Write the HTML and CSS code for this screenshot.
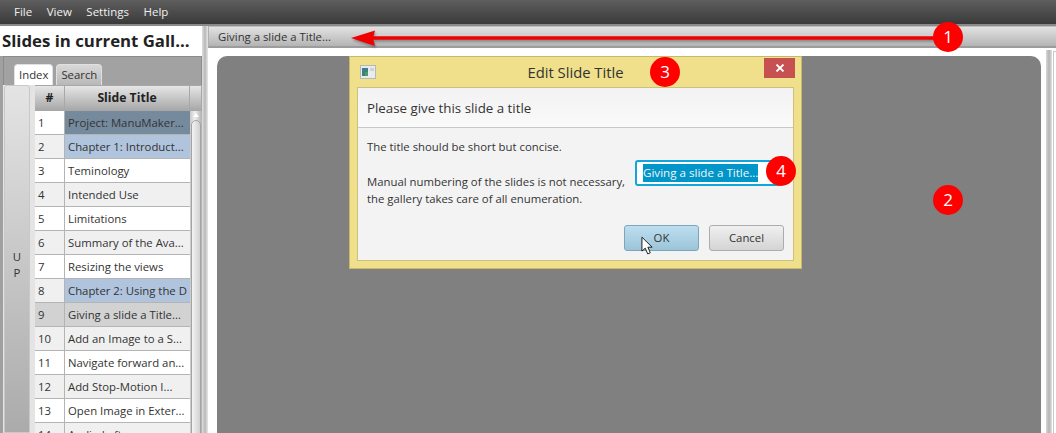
FILE: index.html
```html
<!DOCTYPE html>
<html lang="en">
<head>
  <meta charset="UTF-8">
  <meta name="viewport" content="width=device-width, initial-scale=1.0">
  <title>Edit Slide Title</title>
  <link rel="stylesheet" href="styles.css">
</head>
<body>

  <div class="app">
    <div class="menubar">
      <span>File</span>
      <span>View</span>
      <span>Settings</span>
      <span>Help</span>
    </div>

    <div class="main">
      <div class="side">
        <div class="side-title">Slides in current Gall...</div>
        <div class="tabs">
          <div class="tab active">Index</div>
          <div class="tab">Search</div>
        </div>
        <div class="side-body">
          <div class="up-btn"><span>U</span><span>P</span></div>
          <div class="table">
            <div class="thead">
              <div class="th num">#</div>
              <div class="th title">Slide Title</div>
              <div class="th filler"></div>
            </div>
            <div class="tbody">
              <div class="rows">
                <div class="row"><div class="num">1</div><div class="title dark">Project: ManuMaker...</div></div>
                <div class="row alt"><div class="num">2</div><div class="title blue">Chapter 1: Introduct...</div></div>
                <div class="row"><div class="num">3</div><div class="title">Teminology</div></div>
                <div class="row alt"><div class="num">4</div><div class="title">Intended Use</div></div>
                <div class="row"><div class="num">5</div><div class="title">Limitations</div></div>
                <div class="row alt"><div class="num">6</div><div class="title">Summary of the Ava...</div></div>
                <div class="row"><div class="num">7</div><div class="title">Resizing the views</div></div>
                <div class="row alt"><div class="num">8</div><div class="title blue">Chapter 2: Using the D</div></div>
                <div class="row selected"><div class="num">9</div><div class="title">Giving a slide a Title...</div></div>
                <div class="row alt"><div class="num">10</div><div class="title">Add an Image to a S...</div></div>
                <div class="row"><div class="num">11</div><div class="title">Navigate forward an...</div></div>
                <div class="row alt"><div class="num">12</div><div class="title">Add Stop-Motion I...</div></div>
                <div class="row"><div class="num">13</div><div class="title">Open Image in Exter...</div></div>
                <div class="row alt"><div class="num">14</div><div class="title">Audio Left...</div></div>
              </div>
              <div class="scrollbar">
                <div class="scroll-arrow"></div>
                <div class="scroll-thumb"></div>
              </div>
            </div>
          </div>
        </div>
      </div>

      <div class="splitter"></div>

      <div class="content">
        <div class="slide-bar">Giving a slide a Title...</div>
        <div class="stage-wrap">
          <div class="stage"></div>
          <div class="stage-edge"></div>
          <div class="stage-pane"></div>
        </div>
      </div>
    </div>

    <div class="dialog">
      <div class="dialog-head">
        <svg class="app-icon" width="16" height="14" viewBox="0 0 16 14">
          <rect x="0.5" y="0.5" width="15" height="13" fill="#e8ecec" stroke="#b4b8b8"/>
          <rect x="2" y="3" width="6" height="8" fill="#3f7f80"/>
          <rect x="5" y="7" width="3" height="4" fill="#4f9a6a"/>
          <rect x="10" y="3" width="4" height="3" fill="#c4d4d8"/>
        </svg>
        <div class="dialog-title">Edit Slide Title</div>
        <div class="close-btn">
          <svg width="10" height="8" viewBox="0 0 10 8">
            <path d="M1.5 0.5L8.5 7.5M8.5 0.5L1.5 7.5" stroke="#fff" stroke-width="1.8" fill="none"/>
          </svg>
        </div>
      </div>
      <div class="dialog-panel">
        <div class="dialog-header">Please give this slide a title</div>
        <div class="dialog-body">
          <div class="dialog-text">
            <p>The title should be short but concise.</p>
            <p>Manual numbering of the slides is not necessary,<br>the gallery takes care of all enumeration.</p>
          </div>
          <div class="title-input"><span class="sel">Giving a slide a Title...</span></div>
        </div>
        <div class="dialog-buttons">
          <div class="btn ok">OK</div>
          <div class="btn">Cancel</div>
        </div>
      </div>
    </div>

    <svg class="arrow" width="584" height="20" viewBox="0 0 584 20">
      <path d="M20 10H584" stroke="#f00000" stroke-width="3.5"/>
      <path d="M0 10L24 2.5L22 10L24 18Z" fill="#f00000"/>
    </svg>

    <div class="badge b1">1</div>
    <div class="badge b2">2</div>
    <div class="badge b3">3</div>
    <div class="badge b4">4</div>

    <svg class="cursor" width="13" height="20" viewBox="0 0 14 21">
      <path d="M1 1V16L4.6 12.8L7.2 19L10 17.8L7.4 11.8H12Z" fill="#fff" stroke="#111" stroke-width="1"/>
    </svg>
  </div>

</body>
</html>
```

FILE: styles.css
```css
* {
  box-sizing: border-box;
}

body {
  margin: 0;
  font-family: "Open Sans", Arial, sans-serif;
  font-size: 11.35px;
  color: #333;
}

.app {
  position: relative;
  width: 1056px;
  height: 433px;
  overflow: hidden;
  display: flex;
  flex-direction: column;
  background-color: #fff;
}

.menubar {
  flex: none;
  height: 26px;
  display: flex;
  align-items: center;
  gap: 14.5px;
  padding: 0 0 4px 14px;
  color: #f0f0f0;
  font-size: 11.5px;
  background: linear-gradient(#5e5e5e, #3a3a3a 92%, #8a8a8a 92%);
}

.main {
  flex: 1;
  display: flex;
  min-height: 0;
}

/* left panel */
.side {
  flex: none;
  width: 202px;
  display: flex;
  flex-direction: column;
  background-color: #a0a0a0;
}

.side-title {
  flex: none;
  height: 30px;
  line-height: 29px;
  padding-left: 2px;
  background-color: #fff;
  color: #222;
  font-size: 16.8px;
  font-weight: bold;
  white-space: nowrap;
}

.tabs {
  flex: none;
  height: 29px;
  display: flex;
  align-items: flex-end;
  gap: 3px;
  padding-left: 10px;
  margin: 0 0 0 3px;
  background-color: #a2a2a2;
  border: 1px solid #8c8c8c;
  border-bottom: 0;
}

.tab {
  height: 21px;
  line-height: 20px;
  padding: 0 4px;
  border-radius: 4px 4px 0 0;
  background: linear-gradient(#d8d8d8, #b8b8b8);
  border: 1px solid #e0e0e0;
  border-bottom: 0;
}

.tab.active {
  background: #fff;
}

.side-body {
  flex: 1;
  display: flex;
  min-height: 0;
  margin-left: 3px;
  background-color: #e4e4e4;
}

.up-btn {
  flex: none;
  width: 26px;
  margin-left: 1px;
  display: flex;
  flex-direction: column;
  align-items: center;
  justify-content: center;
  line-height: 16px;
  padding-top: 11px;
  background: linear-gradient(#e4e4e4, #ababab);
  border: 1px solid #c8c8c8;
  border-radius: 3px 3px 0 0;
}

.table {
  flex: 1;
  margin-left: 5px;
  display: flex;
  flex-direction: column;
  min-width: 0;
  background-color: #a8a8a8;
}

.thead {
  flex: none;
  height: 26px;
  display: flex;
  background-color: #a8a8a8;
  padding-top: 1px;
}

.th {
  height: 24px;
  line-height: 23px;
  text-align: center;
  font-size: 12.2px;
  font-weight: bold;
  color: #222;
  background: linear-gradient(#e6e6e6, #a8a8a8);
  border-right: 1px solid #a8a8a8;
}

.th.num {
  width: 30px;
}

.th.title {
  width: 125px;
}

.th.filler {
  flex: 1;
}

.tbody {
  flex: 1;
  display: flex;
  min-height: 0;
}

.rows {
  width: 155px;
  background-color: #fff;
}

.row {
  height: 24px;
  line-height: 23px;
  display: flex;
  background-color: #fff;
  border-bottom: 1px solid #b4b4b4;
}

.row .num {
  flex: none;
  width: 30px;
  padding-left: 3px;
  border-right: 1px solid #b4b4b4;
}

.row .title {
  flex: 1;
  padding-left: 3px;
  white-space: nowrap;
  overflow: hidden;
}

.row.alt {
  background-color: #f0f0f0;
}

.row.selected {
  background-color: #d2d2d2;
}

.title.dark {
  background-color: #768a9e;
}

.title.blue {
  background-color: #b0c4de;
}

.scrollbar {
  flex: 1;
  background: linear-gradient(90deg, #c8c8c8, #f0f0f0 40%, #b0b0b0);
  padding: 2px 1px 0;
}

.scroll-arrow {
  width: 0;
  height: 0;
  margin: 0 auto 3px;
  border: 3px solid transparent;
  border-top: 0;
  border-bottom: 4px solid #fff;
}

.scroll-thumb {
  height: 322px;
  border: 1px solid #a4a4a4;
  border-radius: 5px;
  background: linear-gradient(90deg, #f4f4f4, #d0d0d0);
}

.splitter {
  flex: none;
  width: 6px;
  background: linear-gradient(90deg, #dedede, #b8b8b8 50%, #e8e8e8);
}

/* right panel */
.content {
  flex: 1;
  display: flex;
  flex-direction: column;
  min-width: 0;
}

.slide-bar {
  flex: none;
  height: 22px;
  line-height: 20px;
  padding-left: 9px;
  background: linear-gradient(#e2e2e2, #b4b4b4);
  border-top: 1px solid #bdbdbd;
  border-left: 1px solid #b0b0b0;
  border-bottom: 2px solid #9c9c9c;
}

.stage-wrap {
  flex: 1;
  display: flex;
  padding: 2px 0 0 9px;
  background-color: #fff;
}

.stage {
  width: 824px;
  margin-top: 6px;
  background-color: #808080;
  border-radius: 10px 10px 0 0;
}

.stage-edge {
  flex: none;
  width: 6px;
  margin-left: 5px;
  background: linear-gradient(90deg, #d8d8d8, #b4b4b4 50%, #e0e0e0);
}

.stage-pane {
  flex: 1;
  margin: 1px 0 0 1px;
  border-left: 1px solid #c8c8c8;
  border-top: 1px solid #c8c8c8;
}

/* dialog */
.dialog {
  position: absolute;
  left: 349px;
  top: 56px;
  width: 453px;
  height: 213px;
  display: flex;
  flex-direction: column;
  padding: 0 7px 7px;
  background-color: #f0e08c;
  border: 1px solid #c8b86c;
}

.dialog-head {
  flex: none;
  height: 30px;
  position: relative;
  display: flex;
  align-items: center;
  justify-content: center;
}

.app-icon {
  position: absolute;
  left: 3px;
  top: 8px;
}

.dialog-title {
  font-size: 14.8px;
  color: #333;
}

.close-btn {
  position: absolute;
  right: -1px;
  top: 1px;
  width: 31px;
  height: 20px;
  display: flex;
  align-items: center;
  justify-content: center;
  background-color: #c75050;
}

.dialog-panel {
  flex: 1;
  display: flex;
  flex-direction: column;
  background-color: #f3f3f3;
  border: 1px solid #cdbf7c;
}

.dialog-header {
  flex: none;
  height: 40px;
  line-height: 40px;
  padding-left: 9px;
  font-size: 13.3px;
  background: linear-gradient(#f2f2f2, #fafafa);
  border-bottom: 1px solid #c8c8c8;
}

.dialog-body {
  flex: 1;
  display: flex;
  padding: 10px 9px 0;
}

.dialog-text {
  width: 268px;
  line-height: 17px;
}

.dialog-text p {
  margin: 0 0 18px;
  white-space: nowrap;
}

.title-input {
  width: 146px;
  height: 26px;
  margin: 22px 0 0 0;
  padding: 2px 6px;
  background-color: #fff;
  border: 2px solid #12a5dc;
  border-radius: 3px;
}

.sel {
  display: inline-block;
  line-height: 18px;
  font-size: 11.6px;
  background-color: #0096c9;
  color: #f4f4f4;
  white-space: nowrap;
}

.dialog-buttons {
  flex: none;
  height: 35px;
  display: flex;
  justify-content: flex-end;
  gap: 10px;
  padding-right: 9px;
}

.btn {
  width: 75px;
  height: 26px;
  line-height: 24px;
  text-align: center;
  background: linear-gradient(#f0f0f0, #d4d4d4);
  border: 1px solid #acacac;
  border-radius: 3px;
}

.btn.ok {
  background: linear-gradient(#bcdff0, #9cc4d8);
  border-color: #7ea6b8;
}

/* numbered callouts */
.arrow {
  position: absolute;
  left: 351px;
  top: 28px;
  filter: drop-shadow(1px 2px 1px rgba(0, 0, 0, 0.3));
}

.badge {
  position: absolute;
  width: 30px;
  height: 30px;
  line-height: 29px;
  border-radius: 50%;
  text-align: center;
  background-color: #f00;
  color: #fff;
  font-size: 17px;
}

.b1 {
  left: 933px;
  top: 22px;
}

.b2 {
  left: 933px;
  top: 185px;
}

.b3 {
  left: 650px;
  top: 57px;
}

.b4 {
  left: 766px;
  top: 156px;
}

.cursor {
  position: absolute;
  left: 641px;
  top: 236px;
}
```
